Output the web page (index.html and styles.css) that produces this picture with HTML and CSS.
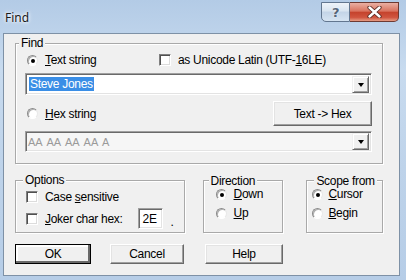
FILE: index.html
```html
<!DOCTYPE html>
<html lang="en">
<head>
  <meta charset="UTF-8">
  <title>Find</title>
  <link rel="stylesheet" href="styles.css">
</head>
<body>
  <div class="window">
    <div class="titlebar">
      <div class="title">Find</div>
      <div class="caption-btns">
        <div class="cap-help">?</div>
        <div class="cap-close">
          <svg width="15" height="12" viewBox="0 0 15 12">
            <path d="M2.5 1.5 L12.5 10.5 M12.5 1.5 L2.5 10.5" stroke="#5a2a22" stroke-width="4.2" stroke-linecap="round"/>
            <path d="M2.5 1.5 L12.5 10.5 M12.5 1.5 L2.5 10.5" stroke="#fff" stroke-width="2.4" stroke-linecap="round"/>
          </svg>
        </div>
      </div>
    </div>

    <div class="client">
      <!-- Find -->
      <div class="group group-find">
        <div class="legend">Find</div>
        <div class="row row-first">
          <label class="opt opt-wide"><span class="radio checked"></span><span><u>T</u>ext string</span></label>
          <label class="opt"><span class="check"></span><span>as Unicode Latin (UTF-<u>1</u>6LE)</span></label>
        </div>
        <div class="combo field">
          <div class="combo-text"><span class="sel">Steve Jones</span></div>
          <div class="combo-btn"><span class="arrow"></span></div>
        </div>
        <div class="row row-hex">
          <label class="opt"><span class="radio"></span><span><u>H</u>ex string</span></label>
          <button class="btn btn-hex">Text -&gt; Hex</button>
        </div>
        <div class="combo combo-hex field disabled">
          <div class="combo-text">AA AA AA AA A</div>
          <div class="combo-btn"><span class="arrow"></span></div>
        </div>
      </div>

      <div class="bottom-groups">
        <div class="group group-options">
          <div class="legend">Options</div>
          <div class="row row-case">
            <label class="opt"><span class="check"></span><span>Case <u>s</u>ensitive</span></label>
          </div>
          <div class="row row-joker">
            <label class="opt"><span class="check"></span><span><u>J</u>oker char hex:</span></label>
            <div class="field hex-input">2E</div>
            <span class="dot">.</span>
          </div>
        </div>

        <div class="group group-dir">
          <div class="legend">Direction</div>
          <label class="opt radio-row"><span class="radio checked"></span><span><u>D</u>own</span></label>
          <label class="opt radio-row"><span class="radio"></span><span><u>U</u>p</span></label>
        </div>

        <div class="group group-scope">
          <div class="legend">Scope from</div>
          <label class="opt radio-row"><span class="radio checked"></span><span><u>C</u>ursor</span></label>
          <label class="opt radio-row"><span class="radio"></span><span><u>B</u>egin</span></label>
        </div>
      </div>

      <div class="buttons">
        <button class="btn btn-default btn-ok">OK</button>
        <button class="btn btn-cancel">Cancel</button>
        <button class="btn btn-help">Help</button>
      </div>
    </div>
  </div>
</body>
</html>
```

FILE: styles.css
```css
body {
  margin: 0;
  font-family: "Liberation Sans", Arial, sans-serif;
  font-size: 12px;
  letter-spacing: -0.3px;
  color: #000;
}
.window {
  width: 406px;
  height: 280px;
  background: linear-gradient(180deg, #b3cbe6 0%, #c8dbef 25%, #bed3ea 60%, #b6cde7 100%);
  display: flex;
  flex-direction: column;
}
.titlebar {
  height: 33px;
  flex-shrink: 0;
  display: flex;
  align-items: flex-start;
}
.title {
  font-family: "Noto Sans", "Open Sans", sans-serif;
  font-size: 12px;
  letter-spacing: 0;
  line-height: 17px;
  margin: 9px 0 0 5px;
  color: #1b1b1b;
  text-shadow: 0 0 5px #fff, 0 0 3px #fff;
}
.caption-btns {
  display: flex;
  margin: 2px 7px 0 auto;
}
.cap-help {
  width: 29px;
  height: 20px;
  box-sizing: border-box;
  border: 1px solid #62768f;
  border-radius: 0 0 0 5px;
  background: linear-gradient(180deg, #eef3f9 0%, #d8e4f0 45%, #c3d4e7 50%, #d6e4f2 100%);
  display: flex;
  align-items: center;
  justify-content: center;
  font-family: "DejaVu Sans", sans-serif;
  font-weight: bold;
  font-size: 13px;
  color: #55667a;
  text-shadow: 0 0 2px #fff;
}
.cap-close {
  width: 49px;
  height: 20px;
  box-sizing: border-box;
  border: 1px solid #6e3a32;
  border-left: none;
  border-radius: 0 0 5px 0;
  background: linear-gradient(180deg, #eab0a3 0%, #d9735f 45%, #c5432d 52%, #d0553f 80%, #e69c84 100%);
  display: flex;
  align-items: center;
  justify-content: center;
}
.client {
  flex: 1;
  margin: 0 6px 4px 3px;
  background: #f0f0f0;
  border: 1px solid #7e91a6;
  padding: 9px 16px 0 11px;
}

/* group boxes */
.group {
  border: 1px solid #a9a9a9;
  box-shadow: inset 1px 1px 0 #fff, 1px 1px 0 #fff;
}
.legend {
  width: fit-content;
  height: 13px;
  line-height: 13px;
  margin: -7px 0 0 -6px;
  padding: 0 2px;
  background: #f0f0f0;
}
.group-find {
  padding: 0 10px 11px 9px;
}
.row {
  display: flex;
  align-items: center;
}
.opt {
  display: flex;
  align-items: center;
  white-space: pre;
}
.row-first {
  height: 16px;
  margin-top: 2px;
  padding-left: 2px;
}
.opt-wide {
  width: 132px;
}
.row-hex {
  height: 25px;
  margin-top: 6px;
  padding-left: 2px;
}

/* radio / check */
.radio {
  width: 9px;
  height: 9px;
  border-radius: 50%;
  background: #fff;
  border: 1px solid;
  border-color: #8a8a8a #e8e8e8 #ffffff #8a8a8a;
  box-shadow: inset 1px 1px 0 #b0b0b0;
  margin-right: 7px;
  position: relative;
  flex-shrink: 0;
}
.radio.checked::after {
  content: "";
  position: absolute;
  left: 3px;
  top: 3px;
  width: 4px;
  height: 4px;
  border-radius: 50%;
  background: #000;
}
.check {
  width: 10px;
  height: 10px;
  background: #fff;
  border: 1px solid;
  border-color: #808080 #fff #fff #808080;
  box-shadow: inset 1px 1px 0 #505050, inset -1px -1px 0 #dcdcdc;
  margin-right: 7px;
  flex-shrink: 0;
}

/* sunken field */
.field {
  background: #fff;
  border: 1px solid;
  border-color: #a0a0a0 #fff #fff #a0a0a0;
  box-shadow: inset 1px 1px 0 #6a6a6a, inset -1px -1px 0 #e3e3e3;
  box-sizing: border-box;
}
.combo {
  height: 22px;
  margin-top: 5px;
  display: flex;
  align-items: center;
}
.combo-hex {
  height: 21px;
  background: #f6f6f6;
}
.combo-text {
  flex: 1;
  padding-left: 3px;
  line-height: 14px;
  white-space: pre;
}
.sel {
  background: #3a8ee6;
  color: #fff;
  padding: 0 1px;
}
.disabled .combo-text {
  color: #9a9a9a;
  padding-left: 2px;
  font-size: 11px;
  letter-spacing: 0;
  word-spacing: 2px;
}
.combo-btn {
  width: 17px;
  height: 17px;
  margin-right: 2px;
  box-sizing: border-box;
  background: #f0f0f0;
  border: 1px solid;
  border-color: #f0f0f0 #696969 #696969 #f0f0f0;
  box-shadow: inset 1px 1px 0 #fff, inset -1px -1px 0 #a0a0a0;
  display: flex;
  align-items: center;
  justify-content: center;
}
.arrow {
  width: 0;
  height: 0;
  border-left: 3.5px solid transparent;
  border-right: 3.5px solid transparent;
  border-top: 4px solid #000;
  margin-top: 1px;
}

/* buttons */
.btn {
  font-family: inherit;
  font-size: 12px;
  letter-spacing: -0.3px;
  color: #000;
  background: #f0f0f0;
  border: 1px solid;
  border-color: #fff #696969 #696969 #fff;
  box-shadow: inset -1px -1px 0 #a0a0a0, inset 1px 1px 0 #e3e3e3;
  padding: 0;
  height: 20px;
}
.btn-hex {
  margin-left: auto;
  width: 99px;
  height: 25px;
}
.btn-default {
  outline: 1px solid #000;
  outline-offset: -1px;
  box-shadow: inset -2px -2px 0 #696969, inset 2px 2px 0 #fff;
}

/* bottom */
.bottom-groups {
  display: flex;
  margin-top: 16px;
  height: 53px;
}
.group-options {
  width: 172px;
  padding-left: 10px;
}
.group-options .legend {
  margin-left: -3px;
}
.row-case {
  height: 16px;
  margin-top: 2px;
}
.row-joker {
  height: 21px;
  margin-top: 3px;
}
.hex-input {
  width: 25px;
  height: 21px;
  margin-left: 15px;
  padding: 3px 0 0 4px;
  line-height: 14px;
}
.dot {
  margin-left: 8px;
  margin-top: 6px;
}
.group-dir,
.group-scope {
  display: flex;
  flex-direction: column;
}
.group-dir .legend,
.group-scope .legend {
  height: 12px;
  line-height: 12px;
  margin-top: -6px;
}
.group-dir {
  width: 73px;
  margin-left: 18px;
  padding-left: 12px;
}
.group-dir .legend {
  margin-left: -7px;
}
.group-scope {
  width: 76px;
  margin-left: 23px;
  padding-left: 5px;
}
.group-scope .legend {
  margin-left: 2px;
}
.radio-row {
  height: 14px;
}
.radio-row + .radio-row {
  margin-top: 5px;
}
.group-scope .radio {
  margin-right: 5px;
}
.buttons {
  display: flex;
  margin-top: 11px;
}
.btn-ok {
  width: 76px;
}
.btn-cancel {
  width: 74px;
  margin-left: 19px;
}
.btn-help {
  width: 78px;
  margin-left: 21px;
}
```
